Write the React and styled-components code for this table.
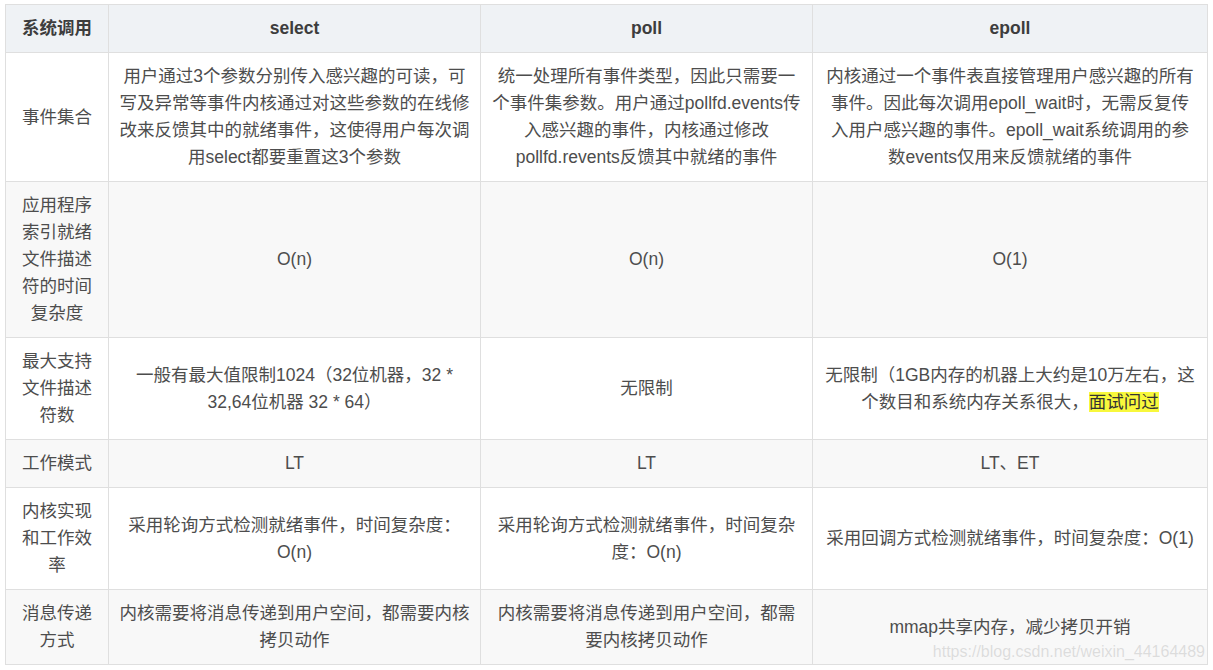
import React from 'react';
import styled, { createGlobalStyle } from 'styled-components';

const GlobalStyle = createGlobalStyle`
  body {
    margin: 0;
    background: #fff;
    font-family: "Liberation Sans", "Noto Sans CJK SC", sans-serif;
  }
`;

const Page = styled.div`
  padding: 4px 6px 0 5px;
`;

const TableWrap = styled.div`
  position: relative;
  width: 1202px;
`;

const Table = styled.table`
  width: 1202px;
  table-layout: fixed;
  border-collapse: collapse;
  font-size: 17.5px;
  line-height: 27px;
  color: #4d4d4d;
`;

const Head = styled.th`
  background: #eff2f5;
  border: 1px solid #dfdfdf;
  padding: 10px 10px;
  font-weight: bold;
  color: #3d3d3d;
  text-align: center;
  vertical-align: middle;
`;

const Row = styled.tr`
  background: ${({ striped }) => (striped ? '#f8f8f8' : '#fff')};
`;

const Cell = styled.td`
  border: 1px solid #dfdfdf;
  padding: 10px 10px;
  text-align: center;
  vertical-align: middle;
`;

const Mark = styled.span`
  background: #f8f83c;
  color: #333;
`;

const Watermark = styled.div`
  position: absolute;
  right: 2px;
  bottom: 4px;
  font-size: 16px;
  line-height: 18px;
  color: #dcdcdc;
  text-shadow: 0 0 1px #fff;
  pointer-events: none;
`;

const rows = [
  [
    '事件集合',
    '用户通过3个参数分别传入感兴趣的可读，可写及异常等事件内核通过对这些参数的在线修改来反馈其中的就绪事件，这使得用户每次调用select都要重置这3个参数',
    '统一处理所有事件类型，因此只需要一个事件集参数。用户通过pollfd.events传入感兴趣的事件，内核通过修改pollfd.revents反馈其中就绪的事件',
    '内核通过一个事件表直接管理用户感兴趣的所有事件。因此每次调用epoll_wait时，无需反复传入用户感兴趣的事件。epoll_wait系统调用的参数events仅用来反馈就绪的事件',
  ],
  ['应用程序索引就绪文件描述符的时间复杂度', 'O(n)', 'O(n)', 'O(1)'],
  [
    '最大支持文件描述符数',
    '一般有最大值限制1024（32位机器，32 * 32,64位机器 32 * 64）',
    '无限制',
    <>无限制（1GB内存的机器上大约是10万左右，这个数目和系统内存关系很大，<Mark>面试问过</Mark></>,
  ],
  ['工作模式', 'LT', 'LT', 'LT、ET'],
  [
    '内核实现和工作效率',
    '采用轮询方式检测就绪事件，时间复杂度：O(n)',
    '采用轮询方式检测就绪事件，时间复杂度：O(n)',
    '采用回调方式检测就绪事件，时间复杂度：O(1)',
  ],
  [
    '消息传递方式',
    '内核需要将消息传递到用户空间，都需要内核拷贝动作',
    '内核需要将消息传递到用户空间，都需要内核拷贝动作',
    'mmap共享内存，减少拷贝开销',
  ],
];

export default function App() {
  return (
    <Page>
      <GlobalStyle />
      <TableWrap>
        <Table>
          <colgroup>
            <col style={{ width: 103 }} />
            <col style={{ width: 372 }} />
            <col style={{ width: 332 }} />
            <col style={{ width: 395 }} />
          </colgroup>
          <thead>
            <tr>
              <Head>系统调用</Head>
              <Head>select</Head>
              <Head>poll</Head>
              <Head>epoll</Head>
            </tr>
          </thead>
          <tbody>
            {rows.map((r, i) => (
              <Row key={i} striped={i % 2 === 1}>
                {r.map((c, j) => (
                  <Cell key={j}>{c}</Cell>
                ))}
              </Row>
            ))}
          </tbody>
        </Table>
        <Watermark>https://blog.csdn.net/weixin_44164489</Watermark>
      </TableWrap>
    </Page>
  );
}
